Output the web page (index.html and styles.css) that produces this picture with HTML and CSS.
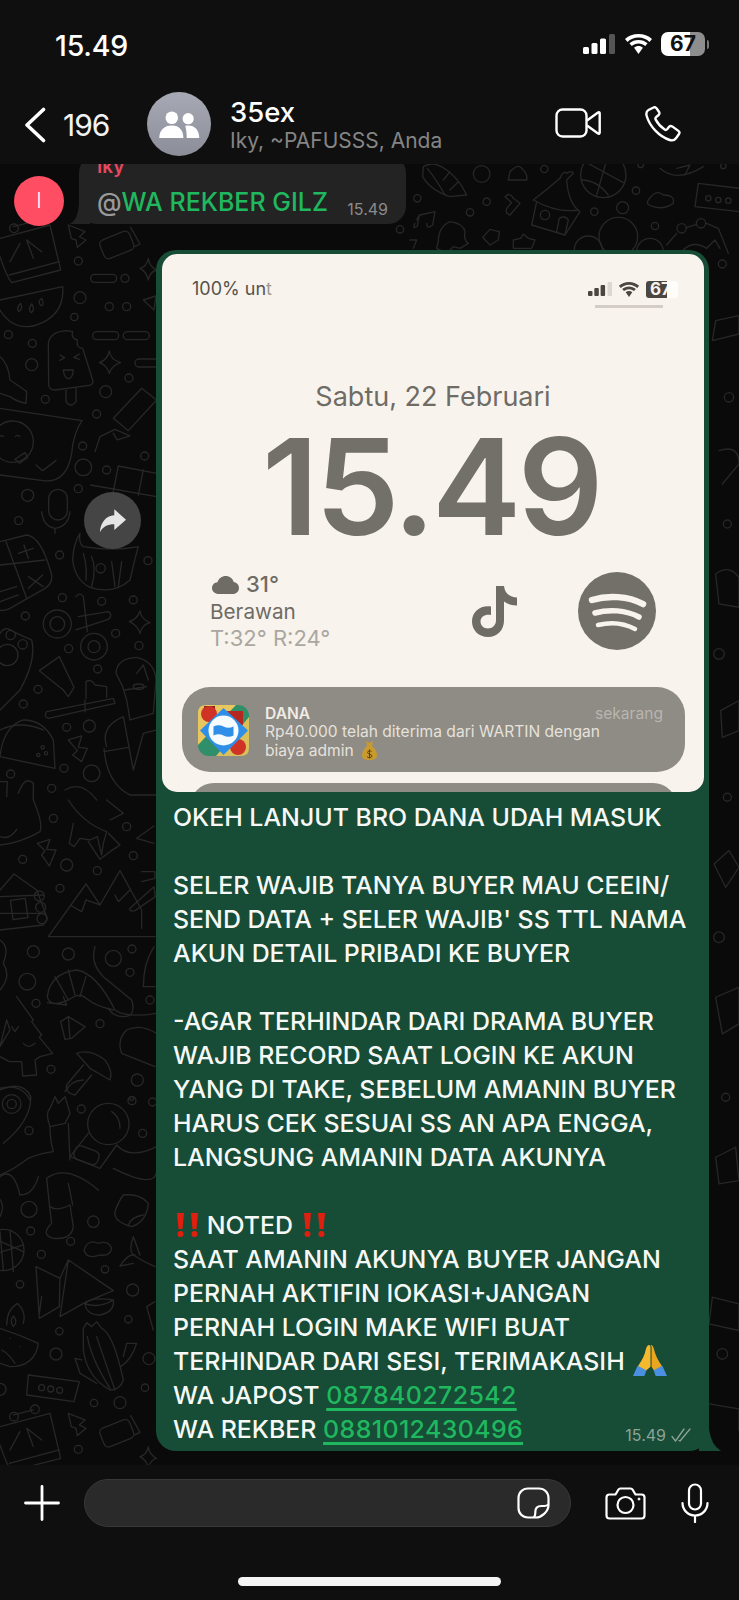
FILE: index.html
```html
<!DOCTYPE html>
<html lang="en">
<head>
    <meta charset="UTF-8">
    <meta name="viewport" content="width=device-width, initial-scale=1.0">
    <title>35ex</title>
    <link rel="stylesheet" href="styles.css">
</head>
<body>
<div class="phone">

    <header class="topbar">
        <div class="status">
            <span class="status-time">15.49</span>
            <div class="status-icons">
                <svg class="signal" viewBox="0 0 32 20"><rect x="0" y="13" width="6" height="7" rx="1.5" fill="#fff"/><rect x="8.5" y="9" width="6" height="11" rx="1.5" fill="#fff"/><rect x="17" y="4.500" width="6" height="15.500" rx="1.500" fill="#fff"/><rect x="26" y="0" width="6" height="20" rx="1.500" fill="#555"/></svg>
                <svg class="wifi" viewBox="0 0 29 20" fill="#fff"><path d="M14.500 3.500c4.300 0 8.100 1.700 11 4.400l2.500-2.800C24.400 1.700 19.700 0 14.500 0S4.600 1.700 1 5.100l2.500 2.800c2.900-2.700 6.700-4.400 11-4.400z"/><path d="M14.500 9.500c2.600 0 4.900 1 6.700 2.600l2.400-2.800C21.200 7.100 18 5.900 14.500 5.900S7.800 7.100 5.400 9.300l2.400 2.800c1.800-1.600 4.100-2.600 6.700-2.600z"/><path d="M14.500 12c-1.700 0-3.200.6-4.400 1.700l4.400 6.300 4.400-6.300C17.700 12.600 16.200 12 14.500 12z"/></svg>
                <div class="battery"><span class="battery-num">67</span></div>
                <span class="battery-nub"></span>
            </div>
        </div>
        <div class="navbar">
            <svg class="back" viewBox="0 0 22 36" fill="none" stroke="#fff" stroke-width="3.600" stroke-linecap="round" stroke-linejoin="round"><path d="M19.500 2.500 3 18l16.500 15.500"/></svg>
            <span class="back-count">196</span>
            <div class="group-avatar">
                <svg viewBox="0 0 42 28" fill="#fff"><circle cx="13" cy="7" r="6.500"/><circle cx="30" cy="8" r="5.800"/><path d="M0 28c0-8 5-13 13-13s12 5 12 13z"/><path d="M27 15.500c1-.3 2-.4 3-.4 7 0 11.500 5 11.500 12.900H28.500c0-5-.5-9-1.500-12.500z"/></svg>
            </div>
            <div class="group-info">
                <div class="group-name">35ex</div>
                <div class="group-members">Iky, ~PAFUSSS, Anda</div>
            </div>
            <svg class="video-icon" viewBox="0 0 46 30" fill="none" stroke="#fff" stroke-width="2.400" stroke-linejoin="round"><rect x="1.500" y="1.500" width="30" height="27" rx="6"/><path d="M32 12.500 43 4.500c1-.6 1.700-.2 1.700 1v19c0 1.200-.7 1.600-1.700 1l-11-8"/></svg>
            <svg class="phone-icon" viewBox="0 0 36 36" fill="none" stroke="#fff" stroke-width="2.400" stroke-linejoin="round"><path d="M8.500 1.500 3.500 4C1.200 5.300 1 7.500 1.700 10c3 10.500 12.500 20.500 23 24 2.500.8 4.800.3 6.300-1.800l3-4.200c.8-1.200.5-2.300-.6-3.100l-6.200-4.500c-1.100-.7-2.200-.6-3.100.4l-2 2.400c-.7.8-1.500.9-2.400.3-3.800-2.500-7-6-9-9.900-.5-1-.4-1.700.4-2.400l2.500-2.200c1-.9 1.100-1.900.5-3L11.700 2.500c-.7-1.200-2-1.700-3.200-1z"/></svg>
        </div>
    </header>

    <main class="chat">
        <svg class="doodles" viewBox="0 164 739 1301" fill="none" stroke="#272727" stroke-width="4" stroke-linecap="round" stroke-linejoin="round">
            <defs>
                <g id="calendar">
                    <path d="M0 55 150 15 182 150 35 188Q20 170 0 110"/>
                    <path d="M28 165 178 125M40 20 100 5"/>
                    <circle cx="42" cy="25" r="13"/>
                    <circle cx="105" cy="3" r="13"/>
                    <path d="M30 125 60 70M100 115 80 60 125 95"/>
                </g>
                <path id="bolt" d="M205 15 255 35 238 50 258 60 232 82 228 60 214 55Z"/>
                <g id="candy">
                    <rect x="303" y="45" width="95" height="60" rx="14" transform="rotate(-22 350 75)"/>
                    <path d="M392 22 420 72 404 80"/>
                </g>
                <path id="star" d="M445 115Q448 140 470 150 450 155 445 180 440 155 420 145 440 140 445 115Z"/>
            </defs>

            <!-- left column, y 220 to 500 -->
            <g transform="translate(0 220) scale(.3333)">
                <use href="#calendar"/>
                <use href="#bolt"/>
                <use href="#candy"/>
                <use href="#star"/>
                <circle cx="235" cy="123" r="12"/>
                <rect x="272" y="163" width="78" height="24" rx="12"/>
                <circle cx="375" cy="175" r="12"/>
                <path d="M0 240 188 200Q195 285 110 315 40 335 0 270"/>
                <path d="M62 250q-14 14-6 24 14-6 6-24zM95 252q-12 16-2 26 14-8 2-26zM125 235q-14 10-2 22 12 0 2-22z"/>
                <circle cx="240" cy="233" r="18"/>
                <circle cx="223" cy="291" r="11"/>
                <circle cx="328" cy="260" r="12"/>
                <circle cx="380" cy="260" r="12"/>
                <path d="M430 240 468 228 462 270Z"/>
                <rect x="278" y="335" width="78" height="24" rx="12"/>
                <rect x="370" y="335" width="78" height="24" rx="12"/>
                <rect x="405" y="417" width="70" height="24" rx="12"/>
                <circle cx="25" cy="344" r="12"/>
                <circle cx="97" cy="370" r="12"/>
                <circle cx="95" cy="434" r="18"/>
                <path d="M145 370Q150 335 200 332L218 335Q212 355 232 360 228 385 248 385L278 480Q282 492 268 496L165 510Q148 510 146 495Z"/>
                <path d="M198 510V545Q212 565 228 545V505M180 405l14 8-14 8M238 402l-16 10 16 6M190 450h30q-2 25-14 26-14-2-16-26z"/>
                <path d="M0 410Q25 430 30 480 60 500 80 515L78 550Q50 545 30 530L0 520"/>
                <path d="M328 393Q332 420 362 428 335 436 328 460 320 435 298 428 322 420 328 393Z"/>
                <circle cx="387" cy="474" r="12"/>
                <circle cx="317" cy="515" r="18"/>
                <circle cx="136" cy="538" r="12"/>
                <circle cx="290" cy="582" r="12"/>
                <path d="M0 565 246 602Q220 640 215 700 200 790 130 782L0 765"/>
                <circle cx="38" cy="665" r="62"/>
                <path d="M10 650q-6-6-12 0M60 650q-6-8-14 0M45 718l30-20 8 14-24 18z"/>
                <path d="M108 735 128 752 168 722"/>
                <circle cx="248" cy="678" r="12"/>
                <circle cx="250" cy="742" r="25"/>
                <circle cx="320" cy="750" r="12"/>
                <circle cx="434" cy="708" r="12"/>
                <circle cx="235" cy="806" r="12"/>
                <circle cx="83" cy="826" r="18"/>
                <rect x="146" y="808" width="56" height="92" rx="28"/>
                <path d="M285 695 300 650 345 628 390 648 352 660 340 640M340 595 425 505 470 540 385 632Z"/>
                <path d="M355 738 470 760M272 795 470 830M355 738 340 815M430 750 415 825"/>
            </g>

            <!-- left column, y 500 to 800 -->
            <g transform="translate(0 500) scale(.3333)">
                <circle cx="56" cy="62" r="12"/>
                <path d="M125 35Q130 80 165 85 205 80 210 35M165 85V100"/>
                <path d="M0 125 80 105Q125 110 155 225 158 250 135 265L30 325Q5 335 0 330"/>
                <path d="M18 125 80 295M0 195 135 180M55 160 100 145M72 135 85 175M85 230 130 260M128 225 85 265M0 275 50 260M0 305 55 285"/>
                <circle cx="179" cy="165" r="12"/>
                <path d="M240 100Q235 130 250 140 340 155 415 140 405 175 390 240 340 285 270 262 225 240 218 180 220 130 240 100Z"/>
                <path d="M250 160Q262 200 258 240M275 170Q290 205 275 260M335 185 345 260M365 185 355 262"/>
                <circle cx="302" cy="205" r="14"/>
                <circle cx="444" cy="182" r="12"/>
                <circle cx="187" cy="293" r="12"/>
                <circle cx="305" cy="304" r="12"/>
                <circle cx="400" cy="300" r="12"/>
                <path d="M228 290Q240 275 250 290L262 395M235 350 325 335Q340 345 325 358L228 390"/>
                <circle cx="172" cy="372" r="42"/>
                <circle cx="172" cy="372" r="22"/>
                <circle cx="282" cy="440" r="40"/>
                <circle cx="282" cy="440" r="18"/>
                <circle cx="76" cy="348" r="12"/>
                <circle cx="347" cy="400" r="12"/>
                <circle cx="417" cy="437" r="12"/>
                <circle cx="206" cy="446" r="12"/>
                <path d="M420 333Q424 358 450 368 425 375 420 400 412 375 388 365 412 358 420 333Z"/>
                <path d="M0 400Q15 375 40 395 60 405 95 420 110 480 60 570L0 630"/>
                <circle cx="32" cy="405" r="14"/>
                <circle cx="68" cy="433" r="14"/>
                <circle cx="22" cy="465" r="32"/>
                <path d="M118 512 178 470 222 562 205 590 190 570Z"/>
                <circle cx="293" cy="507" r="12"/>
                <circle cx="114" cy="568" r="12"/>
                <circle cx="70" cy="612" r="12"/>
                <path d="M140 635 340 595 345 610 145 655Q130 650 140 635ZM255 600V635M258 595V545Q275 535 285 555L320 560V592"/>
                <path d="M348 520Q350 475 410 472 465 485 468 540L460 640 390 660 380 600 368 560Z"/>
                <path d="M375 570 440 560M410 520 430 495 445 540M400 560a16 8 0 1 0 32 0 16 8 0 1 0-32 0M320 740Q300 680 370 650L400 810 430 700 470 690"/>
                <path d="M312 745Q320 850 390 885L470 885M312 755 385 742"/>
                <path d="M0 770Q10 680 70 660 130 660 160 720L165 805 0 770Z"/>
                <path d="M0 690Q60 660 130 690"/>
                <circle cx="128" cy="742" r="5"/>
                <circle cx="138" cy="760" r="5"/>
                <circle cx="115" cy="765" r="5"/>
                <circle cx="200" cy="682" r="12"/>
                <circle cx="268" cy="678" r="18"/>
                <path d="M205 720 245 708 235 742 262 745 245 785 218 765 232 752Z"/>
                <circle cx="192" cy="805" r="12"/>
                <circle cx="275" cy="820" r="25"/>
                <circle cx="32" cy="822" r="12"/>
                <circle cx="155" cy="865" r="12"/>
                <path d="M0 845H22L20 890M55 880Q75 825 100 850V900M195 870Q245 840 290 900"/>
            </g>

            <!-- left column, y 800 to 1080 -->
            <g transform="translate(0 800) scale(.3333)">
                <path d="M100 0Q130 70 120 95 60 130 0 135M0 110q30 10 50-22"/>
                <circle cx="160" cy="55" r="12"/>
                <path d="M205 0Q250 70 320 95L310 130 305 165 292 110 270 120 240 115 222 140 208 130 220 70"/>
                <path d="M265 125 300 178 330 155 360 135 325 100M320 0 370 40 330 60"/>
                <circle cx="380" cy="80" r="12"/>
                <path d="M462 78 410 115 462 130"/>
                <path d="M112 130 150 118 140 148 168 150 148 198 125 165 135 152Z"/>
                <circle cx="68" cy="178" r="12"/>
                <circle cx="200" cy="195" r="18"/>
                <circle cx="292" cy="212" r="12"/>
                <circle cx="400" cy="167" r="12"/>
                <circle cx="180" cy="265" r="12"/>
                <path d="M0 270 42 222 110 270 142 355 130 375 0 390M0 340 135 340M0 290 130 285"/>
                <rect x="35" y="298" width="45" height="58" transform="rotate(-8 57 327)"/>
                <circle cx="118" cy="288" r="15"/>
                <circle cx="122" cy="322" r="15"/>
                <circle cx="126" cy="356" r="15"/>
                <path d="M145 410 258 252 300 315 360 212 425 330V385M145 410H370L465 410M215 318 245 335 258 300 300 315M345 285 355 305 390 270M425 215H465V235L425 245"/>
                <path d="M390 325 462 260 466 290 405 332Q385 335 390 325Z"/>
                <circle cx="100" cy="455" r="18"/>
                <circle cx="205" cy="462" r="18"/>
                <circle cx="82" cy="545" r="25"/>
                <circle cx="108" cy="610" r="12"/>
                <path d="M0 420Q30 440 10 490 35 530 0 570"/>
                <path d="M285 440Q270 490 310 530L395 600Q410 650 370 650 340 650 325 625"/>
                <circle cx="340" cy="475" r="24"/>
                <circle cx="396" cy="447" r="12"/>
                <circle cx="390" cy="517" r="12"/>
                <circle cx="450" cy="600" r="12"/>
                <path d="M462 440Q430 490 430 560H465"/>
                <path d="M142 590Q150 520 230 510 290 520 345 630 380 655 470 640"/>
                <path d="M142 590Q150 625 205 600 240 575 258 595 290 620 340 630M165 530 205 600M205 510 225 585M258 530 240 590M142 608 200 615 190 590"/>
                <path d="M182 665 205 650 255 680 215 715 195 718ZM205 650 210 715"/>
                <circle cx="300" cy="671" r="12"/>
                <path d="M470 700Q420 670 380 690 350 720 365 760L465 800"/>
                <path d="M50 590 100 660 95 665 125 705 118 712 158 760 120 770 105 780 110 825 68 828 65 785 28 785 0 770M0 740 30 690 20 660Z"/>
                <path d="M35 680 45 695 55 680M70 730Q85 748 105 730"/>
                <circle cx="153" cy="808" r="12"/>
                <path d="M230 760Q270 745 315 780 340 815 330 840L270 805ZM250 795 200 855Q195 880 225 885L275 825"/>
                <circle cx="412" cy="840" r="18"/>
                <circle cx="395" cy="895" r="6"/>
                <path d="M0 865Q65 850 90 900"/>
            </g>

            <!-- left column, y 1080 to 1465 -->
            <g transform="translate(0 1080) scale(.3333)">
                <path d="M195 35Q215 0 250 0M0 30Q70 0 92 50 95 120 10 190"/>
                <circle cx="35" cy="72" r="28"/>
                <circle cx="35" cy="72" r="14"/>
                <circle cx="87" cy="152" r="12"/>
                <circle cx="244" cy="87" r="12"/>
                <circle cx="396" cy="62" r="12"/>
                <circle cx="458" cy="66" r="12"/>
                <circle cx="428" cy="160" r="12"/>
                <path d="M165 50 175 70 195 50 210 100 195 130 150 140Q135 100 150 85Z"/>
                <path d="M150 140Q150 180 160 215 120 220 85 235 40 270 0 285M205 130 210 240"/>
                <circle cx="325" cy="132" r="62"/>
                <path d="M335 95Q360 110 360 145M265 160 210 230 300 265 350 195Q390 240 470 200"/>
                <rect x="222" y="205" width="75" height="42" rx="16" transform="rotate(20 260 226)"/>
                <path d="M340 265Q470 330 470 270M0 290Q40 260 60 345 100 345 115 290M140 295Q200 250 295 330M140 295 150 390 155 430Q120 465 160 475 215 480 220 440L210 375Q170 395 150 380"/>
                <path d="M205 310 218 375"/>
                <path d="M0 358Q15 380 0 410"/>
                <circle cx="87" cy="388" r="24"/>
                <circle cx="280" cy="425" r="17"/>
                <path d="M370 345Q420 340 445 370 440 425 395 440 340 425 345 395 355 365 370 345ZM385 435Q395 410 430 405"/>
                <circle cx="10" cy="510" r="62"/>
                <path d="M-30 470 70 515M-40 530 70 495M30 450 40 575M0 455 10 570"/>
                <circle cx="92" cy="453" r="12"/>
                <circle cx="212" cy="484" r="12"/>
                <circle cx="124" cy="523" r="12"/>
                <path d="M252 510Q265 475 295 490 325 480 335 505 330 530 300 525 260 540 252 510Z"/>
                <path d="M400 470Q385 510 400 525 430 545 465 560M400 470 420 525M360 558Q385 520 405 525M360 558 400 550"/>
                <circle cx="315" cy="568" r="11"/>
                <circle cx="398" cy="630" r="18"/>
                <circle cx="60" cy="613" r="11"/>
                <path d="M108 560 180 595 178 680 118 715ZM205 540 340 632 260 665 180 710ZM180 595 205 540M118 700 125 650"/>
                <path d="M255 672Q270 650 340 660 345 695 300 705 260 705 255 672ZM255 672Q300 685 340 660"/>
                <circle cx="178" cy="754" r="11"/>
                <circle cx="168" cy="822" r="18"/>
                <circle cx="385" cy="718" r="11"/>
                <path d="M20 735Q20 690 52 670 80 695 70 730"/>
                <path d="M40 708Q28 722 40 740 55 725 40 708Z"/>
                <path d="M0 745Q60 765 115 790 105 860 30 860L0 850M5 810Q25 820 45 850M30 775h1M60 800h1"/>
                <path d="M465 665 440 680 460 750"/>
                <path d="M250 745 260 728 275 740 290 725 305 745Q340 760 370 900 360 930 330 930 260 890 250 810ZM290 770Q310 830 345 930M262 770Q275 840 330 925M370 830 380 790 410 790Q395 840 362 860M245 840 225 835 240 880 290 910"/>
                <circle cx="447" cy="836" r="18"/>
                <circle cx="435" cy="923" r="11"/>
                <circle cx="282" cy="969" r="11"/>
                <circle cx="360" cy="968" r="18"/>
                <path d="M85 885 238 905 222 965 80 945Z"/>
                <circle cx="125" cy="923" r="9"/>
                <circle cx="152" cy="927" r="9"/>
                <circle cx="179" cy="931" r="9"/>
                <circle cx="0" cy="928" r="18"/>
                <g transform="translate(0 985)">
                    <use href="#calendar"/>
                    <use href="#bolt"/>
                    <use href="#candy"/>
                    <use href="#star"/>
                    <circle cx="235" cy="123" r="12"/>
                </g>
            </g>

            <!-- top strip, right of the received bubble -->
            <g transform="translate(400 160) scale(.3333)">
                <path d="M70 20Q100 0 140 30 180 60 200 105L150 110Q90 90 68 50Z"/>
                <path d="M82 25Q110 60 135 105M150 35 130 60M175 65 150 90"/>
                <circle cx="245" cy="42" r="25"/>
                <path d="M330 35Q350 15 360 20 385 40 380 60H325Z"/>
                <circle cx="433" cy="27" r="11"/>
                <circle cx="52" cy="115" r="11"/>
                <circle cx="260" cy="125" r="11"/>
                <circle cx="210" cy="157" r="11"/>
                <path d="M315 110Q330 95 340 115L360 130 330 165Q315 160 320 145L335 128Z"/>
                <path d="M60 165 105 155 98 195Q80 210 80 190M50 180 58 165 52 198Q35 210 45 190"/>
                <path d="M400 120Q440 90 480 55 490 30 500 40 515 30 520 40L500 60Q505 130 540 155L495 225 395 195 410 125"/>
                <path d="M400 120Q470 160 535 150"/>
                <circle cx="435" cy="165" r="14"/>
                <path d="M470 215 478 175Q495 165 505 180L495 225"/>
                <circle cx="610" cy="45" r="68"/>
                <path d="M555 5 670 68M545 60Q590 60 625 105M620 0 590 105"/>
                <path d="M780 25Q830 70 910 20"/>
                <path d="M830 25 870 15 855 45"/>
                <circle cx="722" cy="15" r="8"/>
                <circle cx="970" cy="18" r="8"/>
                <circle cx="708" cy="92" r="11"/>
                <circle cx="583" cy="155" r="11"/>
                <circle cx="668" cy="143" r="18"/>
                <circle cx="765" cy="198" r="11"/>
                <path d="M745 120Q770 85 790 105 825 105 820 130 790 150 760 140 735 135 745 120Z"/>
                <path d="M895 70 1020 85V155L885 140Z"/>
                <circle cx="925" cy="115" r="8"/>
                <circle cx="955" cy="120" r="8"/>
                <circle cx="985" cy="122" r="8"/>
                <circle cx="655" cy="230" r="58"/>
                <circle cx="565" cy="270" r="42"/>
                <circle cx="750" cy="275" r="40"/>
                <circle cx="845" cy="205" r="14"/>
                <circle cx="903" cy="190" r="14"/>
                <path d="M858 203 890 193M830 220 800 255M920 190 955 205 985 280"/>
                <path d="M115 245Q115 200 150 185 190 190 195 215 190 240 205 250L180 265 160 260 140 280 110 265Z"/>
                <path d="M248 232 270 208 298 215 295 240 270 255Z"/>
                <path d="M340 240 362 235 370 222 385 235 405 240 395 265 340 265Z"/>
                <path d="M30 240 50 240 40 265"/>
                <circle cx="0" cy="208" r="11"/>
                <path d="M850 270Q880 240 920 265L945 240 960 265"/>
            </g>

            <!-- right edge -->
            <g transform="translate(709 164) scale(.3333)">
                <circle cx="40" cy="300" r="12"/>
                <path d="M20 470 90 455V510L10 530Z"/>
                <circle cx="60" cy="700" r="14"/>
                <path d="M30 860Q90 840 90 900L40 960"/>
                <circle cx="55" cy="1080" r="12"/>
                <path d="M20 1230Q60 1200 90 1240V1330L30 1320Z"/>
                <circle cx="30" cy="1470" r="16"/>
                <path d="M35 1640 90 1610V1700L40 1720Z"/>
                <circle cx="55" cy="1900" r="12"/>
                <path d="M15 2100 60 2060 90 2110 50 2170Z"/>
                <circle cx="30" cy="2320" r="16"/>
                <path d="M20 2500 90 2470V2580L40 2610Z"/>
                <circle cx="50" cy="2800" r="12"/>
                <path d="M20 2980 80 2950 90 3050 30 3060Z"/>
                <path d="M10 3400 90 3420V3500L0 3480Z"/>
                <circle cx="40" cy="3570" r="16"/>
                <path d="M0 3720 90 3735V3800"/>
            </g>
        </svg>

        <div class="msg-in">
            <div class="msg-in-avatar">I</div>
            <div class="msg-in-bubble">
                <div class="msg-in-name">Iky</div>
                <div class="msg-in-text"><span class="at">@</span><span class="mention">WA REKBER GILZ</span><span class="msg-in-time">15.49</span></div>
            </div>
        </div>

        <div class="msg-out">
            <button class="forward">
                <svg viewBox="0 0 30 26" fill="#e6e6e6"><path d="M17 0 30 11.500 17 23v-6.500C9.500 16.500 4.500 19 1 25.500 1.500 15 7.500 7 17 6.500z"/></svg>
            </button>
            <div class="msg-out-bubble">
                <div class="shot">
                    <div class="shot-status">
                        <span class="shot-carrier">100% un<span class="fade">t</span></span>
                        <div class="shot-icons">
                            <svg class="shot-signal" viewBox="0 0 24 14"><rect x="0" y="9" width="4.500" height="5" rx="1" fill="#4b463f"/><rect x="6.300" y="6" width="4.500" height="8" rx="1" fill="#4b463f"/><rect x="12.600" y="3" width="4.500" height="11" rx="1" fill="#4b463f"/><rect x="19.500" y="0" width="4.500" height="14" rx="1" fill="#dcd7cf"/></svg>
                            <svg class="shot-wifi" viewBox="0 0 29 20" fill="#4b463f"><path d="M14.500 3.500c4.300 0 8.100 1.700 11 4.400l2.500-2.800C24.400 1.700 19.700 0 14.500 0S4.600 1.700 1 5.100l2.500 2.800c2.900-2.700 6.700-4.400 11-4.400z"/><path d="M14.500 9.500c2.600 0 4.900 1 6.700 2.600l2.400-2.800C21.200 7.100 18 5.900 14.500 5.900S7.800 7.100 5.400 9.300l2.400 2.800c1.800-1.600 4.100-2.600 6.700-2.600z"/><path d="M14.500 12c-1.700 0-3.200.6-4.400 1.700l4.400 6.300 4.400-6.300C17.700 12.600 16.200 12 14.500 12z"/></svg>
                            <div class="shot-battery"><span>67</span></div>
                        </div>
                    </div>
                    <div class="shot-line"></div>
                    <div class="shot-date">Sabtu, 22 Februari</div>
                    <div class="shot-clock">15.49</div>
                    <div class="widgets">
                        <div class="weather">
                            <div class="weather-temp">
                                <svg viewBox="0 0 27 18" fill="#6f6b65"><path d="M7 18C3 18 0 15.500 0 12c0-3.200 2.400-5.500 5.500-5.800C6.600 2.500 10 0 13.700 0c3.900 0 7 2.400 8 6 3 .5 5.300 2.800 5.300 6 0 3.400-2.800 6-6 6z"/></svg>
                                31°
                            </div>
                            <div class="weather-desc">Berawan</div>
                            <div class="weather-range">T:32° R:24°</div>
                        </div>
                        <svg class="tiktok" viewBox="0 0 45 51" fill="#6f6b65"><path d="M24 0h8c.5 6.500 5 11 13 11.500v8c-5 .2-9.500-1.300-13-4v19C32 44 25.500 51 16 51 7 51 0 44.500 0 35.500 0 25.500 8.500 19 19 20.500v8.500c-5.500-1.200-10.500 1.500-10.500 6.500 0 4.200 3.300 7 7.300 7 4.500 0 8.200-3 8.200-8.500z"/></svg>
                        <svg class="spotify" viewBox="0 0 78 78"><circle cx="39" cy="39" r="39" fill="#736f69"/><g fill="none" stroke="#f8f4ed" stroke-linecap="round"><path d="M14 28c16-5 36-4 51 4" stroke-width="6.500"/><path d="M17 41c14-4 31-3 44 4" stroke-width="5.500"/><path d="M20 53c12-3 26-2 37 4" stroke-width="4.500"/></g></svg>
                    </div>
                    <div class="notif">
                        <svg class="dana-icon" viewBox="0 0 51 51">
                            <rect width="51" height="51" rx="11" fill="#2f8f6a"/>
                            <path d="M0 8Q0 0 8 0H38L0 40Z" fill="#e9c75f"/>
                            <path d="M51 12V43Q51 51 43 51H18Z" fill="#d9c05a"/>
                            <rect x="29" y="6" width="16" height="14" fill="#b5281f"/>
                            <rect x="6" y="1" width="11" height="3" fill="#7a2a1a"/>
                            <circle cx="11" cy="9" r="8" fill="#cf3325"/>
                            <circle cx="40" cy="42" r="8" fill="#cf3325"/>
                            <path d="M25.500 3 50 25.500 25.500 50 2 25.500Z" fill="#2f8fe8"/>
                            <circle cx="25.500" cy="25.500" r="15" fill="#f5fbff"/>
                            <path d="M15.500 21.500q5-2.500 10 0t10 0v9q-5 2.500-10 0t-10 0z" fill="#2f8fe8"/>
                        </svg>
                        <div class="notif-body">
                            <div class="notif-head"><span class="notif-app">DANA</span><span class="notif-when">sekarang</span></div>
                            <div class="notif-text">Rp40.000 telah diterima dari WARTIN dengan<br>biaya admin
                                <svg class="moneybag" viewBox="0 0 15 19"><path d="M4 0 7.500 2 11 0 10 5C13 7.500 15 10.500 15 14c0 4-3 5-7.500 5S0 18 0 14c0-3.500 2-6.500 5-9z" fill="#c99a2e"/><path d="M9.500 10.500C9 9.500 5.500 9.500 5.500 11.500s4.500 1.500 4.500 3.500-4 2-5 .7M7.500 8.500v9" fill="none" stroke="#5c4410" stroke-width="1"/></svg>
                            </div>
                        </div>
                    </div>
                    <div class="notif-next"></div>
                </div>
                <div class="msg-out-text">
                    OKEH LANJUT BRO DANA UDAH MASUK<br>
                    <br>
                    SELER WAJIB TANYA BUYER MAU CEEIN/<br>
                    SEND DATA + SELER WAJIB' SS TTL NAMA<br>
                    AKUN DETAIL PRIBADI KE BUYER<br>
                    <br>
                    -AGAR TERHINDAR DARI DRAMA BUYER<br>
                    WAJIB RECORD SAAT LOGIN KE AKUN<br>
                    YANG DI TAKE, SEBELUM AMANIN BUYER<br>
                    HARUS CEK SESUAI SS AN APA ENGGA,<br>
                    LANGSUNG AMANIN DATA AKUNYA<br>
                    <br>
                    <svg class="bangs" viewBox="0 0 23 24" fill="#e0200f"><path d="M1 0h7L6.500 16h-4zM15 0h7l-1.500 16h-4z"/><circle cx="4.500" cy="21" r="3"/><circle cx="18.500" cy="21" r="3"/></svg>
                    NOTED
                    <svg class="bangs" viewBox="0 0 23 24" fill="#e0200f"><path d="M1 0h7L6.500 16h-4zM15 0h7l-1.500 16h-4z"/><circle cx="4.500" cy="21" r="3"/><circle cx="18.500" cy="21" r="3"/></svg><br>
                    SAAT AMANIN AKUNYA BUYER JANGAN<br>
                    PERNAH AKTIFIN IOKASI+JANGAN<br>
                    PERNAH LOGIN MAKE WIFI BUAT<br>
                    TERHINDAR DARI SESI, TERIMAKASIH
                    <svg class="pray" viewBox="0 0 33 30"><path d="M15.500 0c1 0 1.500 1 1.500 2v19l-4.500 4-8-4c2-3 5-7 7-13 1-4 2-8 4-8z" fill="#f5b92e"/><path d="M17.500 0c-1 0 .5 1 .5 2v19l2.500 4 8-4c-2-3-5-7-7-13-1-4-2-8-4-8z" fill="#eaa61f"/><path d="M4.500 20 13 24.500 11 30H0zM28.500 20 20 24.500 22 30h11z" fill="#4a8fe0"/></svg><br>
                    WA JAPOST <a class="num" href="#">087840272542</a><br>
                    WA REKBER <a class="num" href="#">0881012430496</a>
                </div>
                <div class="msg-out-meta">
                    <span>15.49</span>
                    <svg viewBox="0 0 20 14" fill="none" stroke="#8da398" stroke-width="1.300" stroke-linecap="round" stroke-linejoin="round"><path d="M1 8.500 4.500 13 13 1M8 12.500 9 13 19 1"/></svg>
                </div>
            </div>
        </div>
    </main>

    <footer class="composer">
        <div class="composer-row">
            <svg class="plus" viewBox="0 0 36 36" stroke="#fff" stroke-width="2.800" stroke-linecap="round"><path d="M18 1.500v33M1.500 18h33"/></svg>
            <div class="input">
                <svg class="sticker" viewBox="0 0 33 32" fill="none" stroke="#fff" stroke-width="2.200" stroke-linejoin="round"><path d="M11 1.500h11c5.500 0 9.500 4 9.500 9.500v7C31.500 25 24 30.500 19 30.500h-8C5.500 30.500 1.500 26.500 1.500 21V11C1.500 5.500 5.500 1.500 11 1.500z"/><path d="M31.300 17.500c-1 1-2 1.500-4 1.500h-3c-4 0-6 2.500-6 6v1c0 2-.5 3.500-1.500 4.500"/></svg>
            </div>
            <svg class="camera" viewBox="0 0 41 33" fill="none" stroke="#fff" stroke-width="2.200" stroke-linejoin="round"><path d="M4.500 7.500h6l3-5c.4-.7 1-1 1.800-1h10.400c.8 0 1.400.3 1.800 1l3 5h6c1.700 0 3 1.300 3 3v18c0 1.700-1.300 3-3 3h-32c-1.700 0-3-1.300-3-3v-18c0-1.700 1.300-3 3-3z"/><circle cx="20.500" cy="18" r="8"/><circle cx="34" cy="12" r="1" fill="#fff" stroke-width="1"/></svg>
            <svg class="mic" viewBox="0 0 28 40" fill="none" stroke="#fff" stroke-width="2.200" stroke-linecap="round"><rect x="8" y="1.500" width="12" height="25" rx="6"/><path d="M1.500 20c0 7 5.500 12.500 12.500 12.500S26.500 27 26.500 20M14 33v6"/></svg>
        </div>
        <div class="home-bar"></div>
    </footer>

</div>
</body>
</html>
```

FILE: styles.css
```css
* {
    margin: 0;
    padding: 0;
    box-sizing: border-box;
}

body {
    font-family: Inter, "Noto Sans", sans-serif;
    background-color: #0f0f0f;
    color: white;
}

.phone {
    width: 739px;
    height: 1600px;
    display: flex;
    flex-direction: column;
    overflow: hidden;
}

/* Top bar */
.topbar {
    height: 164px;
    flex-shrink: 0;
    background-color: #0f0f0f;
    position: relative;
    z-index: 2;
}

.status {
    height: 88px;
    padding: 30px 30px 0 55px;
    display: flex;
    justify-content: space-between;
    align-items: flex-start;
}

.status-time {
    font-size: 28.500px;
    line-height: 32px;
    font-weight: 500;
    letter-spacing: -0.2px;
}

.status-icons {
    display: flex;
    align-items: center;
    height: 32px;
    margin-top: -2px;
}

.signal {
    width: 32px;
    height: 20px;
    margin-right: 9px;
}

.wifi {
    width: 29px;
    height: 20px;
    margin-right: 8px;
}

.battery {
    width: 44px;
    height: 24px;
    border-radius: 7px;
    background: linear-gradient(to right, #fff 66%, #8e8e8e 66%);
    color: #111;
    text-align: center;
}

.battery-num {
    font-size: 21px;
    line-height: 24px;
    font-weight: 700;
    display: block;
}

.battery-nub {
    width: 2px;
    height: 9px;
    margin-left: 2px;
    background-color: #777;
    border-radius: 0 2px 2px 0;
}

.navbar {
    display: flex;
    align-items: flex-start;
    padding-left: 24px;
    height: 76px;
}

.back {
    width: 22px;
    height: 36px;
    margin-top: 19px;
}

.back-count {
    font-size: 30px;
    line-height: 36px;
    margin: 19px 0 0 17px;
    width: 84px;
    letter-spacing: -1px;
    color: #f2f2f2;
}

.group-avatar {
    width: 64px;
    height: 64px;
    border-radius: 50%;
    margin-top: 4px;
    background: linear-gradient(#a7aab4, #8b8e98);
    display: flex;
    align-items: center;
    justify-content: center;
}

.group-avatar svg {
    width: 41px;
    height: 27px;
}

.group-info {
    margin-left: 19px;
    width: 325px;
    margin-top: 7px;
}

.group-name {
    font-size: 27.500px;
    line-height: 34px;
    font-weight: 500;
}

.group-members {
    font-size: 21px;
    line-height: 24px;
    margin-top: 0;
    color: #858585;
}

.video-icon {
    width: 46px;
    height: 30px;
    margin-top: 20px;
}

.phone-icon {
    width: 36px;
    height: 36px;
    margin: 18px 0 0 44px;
}

/* Chat */
.chat {
    flex: 1;
    position: relative;
    overflow: hidden;
    background-color: #0a0a0a;
}

.doodles {
    position: absolute;
    top: 0;
    left: 0;
    width: 739px;
    height: 1301px;
}

.msg-in {
    position: relative;
    display: flex;
    align-items: flex-end;
    padding-left: 14px;
    margin-top: -9px;
}

.msg-in-avatar {
    width: 50px;
    height: 50px;
    border-radius: 50%;
    margin-bottom: -2px;
    background-color: #ff4e64;
    text-align: center;
    font-size: 21px;
    line-height: 50px;
    font-weight: 300;
}

.msg-in-bubble {
    position: relative;
    margin-left: 15px;
    width: 327px;
    padding: 0 18px 2px;
    background-color: #232323;
    border-radius: 18px;
}

.msg-in-bubble::before {
    content: "";
    position: absolute;
    left: -9px;
    bottom: 0;
    width: 20px;
    height: 20px;
    background-color: #232323;
    clip-path: path("M0 20 Q8 16 9 0 L20 0 L20 20 Z");
}

.msg-in-name {
    font-size: 19px;
    line-height: 24px;
    font-weight: 600;
    color: #e8475f;
}

.msg-in-text {
    padding-top: 6px;
    font-size: 25px;
    line-height: 34px;
    font-weight: 500;
    white-space: nowrap;
    display: flex;
    align-items: baseline;
}

.at {
    color: #9a9a9a;
}

.mention {
    color: #20b85f;
}

.msg-in-time {
    margin-left: auto;
    font-size: 16px;
    font-weight: 400;
    color: #8b8b8b;
    position: relative;
    top: 4px;
}

.msg-out {
    position: relative;
    display: flex;
    justify-content: flex-end;
    margin-top: 26px;
    padding-right: 30px;
}

.forward {
    width: 57px;
    height: 57px;
    margin: 242px 15px 0 0;
    border: none;
    border-radius: 50%;
    background-color: #454545;
    display: flex;
    align-items: center;
    justify-content: center;
}

.forward svg {
    width: 27px;
    height: 24px;
}

.msg-out-bubble {
    position: relative;
    width: 553px;
    padding: 4px 5px 5px 6px;
    background-color: #174c37;
    border-radius: 20px;
}

.msg-out-bubble::after {
    content: "";
    position: absolute;
    right: -12px;
    bottom: 0;
    width: 22px;
    height: 22px;
    background-color: #174c37;
    clip-path: path("M0 0 L10 0 Q12 16 22 22 L0 22 Z");
}

/* Screenshot inside the bubble */
.shot {
    height: 538px;
    overflow: hidden;
    border-radius: 15px;
    background-color: #f8f4ed;
    color: #6f6b65;
}

.shot-status {
    display: flex;
    justify-content: space-between;
    padding: 24px 26px 0 30px;
    height: 47px;
}

.shot-carrier {
    font-size: 18px;
    line-height: 22px;
    color: #56514a;
}

.fade {
    opacity: 0.55;
}

.shot-icons {
    display: flex;
    align-items: center;
    height: 22px;
}

.shot-signal {
    width: 24px;
    height: 14px;
    margin-right: 6px;
}

.shot-wifi {
    width: 22px;
    height: 15px;
    margin-right: 6px;
}

.shot-battery {
    width: 32px;
    height: 17px;
    border-radius: 3px;
    background: linear-gradient(to right, #4b463f 66%, #fffdf9 66%);
    overflow: hidden;
}

.shot-battery span {
    display: block;
    width: 21px;
    padding-left: 4px;
    font-size: 17px;
    line-height: 17px;
    font-weight: 700;
    color: #f8f4ed;
    white-space: nowrap;
    overflow: hidden;
}

.shot-line {
    width: 68px;
    height: 3px;
    margin: 4px 41px 0 auto;
    background-color: #d3cdc6;
}

.shot-date {
    margin-top: 72px;
    text-align: center;
    font-size: 27px;
    line-height: 34px;
}

.shot-clock {
    margin-top: 7px;
    text-align: center;
    font-size: 134px;
    line-height: 130px;
    font-weight: 600;
    letter-spacing: -3.500px;
    color: #736f69;
    padding-right: 4px;
}

.widgets {
    display: flex;
    align-items: flex-start;
    margin-top: 20px;
    padding: 0 48px 0 48px;
}

.weather {
    flex: 1;
    font-size: 22px;
    line-height: 27px;
}

.weather-temp {
    display: flex;
    align-items: center;
    font-weight: 500;
}

.weather-temp svg {
    width: 27px;
    height: 18px;
    margin: 0 7px 0 2px;
}

.weather-desc {
    font-size: 20.700px;
}

.weather-range {
    color: #aaa7a1;
}

.tiktok {
    width: 45px;
    height: 51px;
    margin-top: 15px;
}

.spotify {
    width: 78px;
    height: 78px;
    margin-left: 61px;
    margin-top: 1px;
}

.notif {
    display: flex;
    height: 85px;
    margin: 35px 19px 0 20px;
    padding: 18px 22px 0 16px;
    background-color: #8f8b85;
    border-radius: 28px;
}

.dana-icon {
    width: 51px;
    height: 51px;
    flex-shrink: 0;
}

.notif-body {
    flex: 1;
    margin-left: 16px;
    font-size: 15.600px;
    line-height: 18px;
    color: #e6e2db;
}

.notif-head {
    display: flex;
    justify-content: space-between;
}

.notif-app {
    font-weight: 600;
    color: #f0ece5;
}

.notif-when {
    color: #b9b5af;
}

.moneybag {
    width: 15px;
    height: 19px;
    margin-left: 4px;
    vertical-align: -4px;
}

.notif-next {
    height: 40px;
    margin: 11px 27px 0 28px;
    background-color: #8f8b85;
    border-radius: 24px 24px 0 0;
}

/* Message text */
.msg-out-text {
    margin-top: 8px;
    padding: 0 11px;
    font-size: 24.900px;
    line-height: 34px;
    font-weight: 500;
    white-space: nowrap;
    color: #f6f8f6;
}

.bangs {
    width: 23px;
    height: 24px;
    margin: 0 1px 0 3px;
    vertical-align: -3px;
}

.pray {
    width: 34px;
    height: 31px;
    margin-left: 2px;
    vertical-align: -6px;
}

.num {
    color: #20b85f;
    letter-spacing: 0.4px;
    text-decoration: underline;
    text-decoration-thickness: 2.500px;
    text-underline-offset: 4px;
}

.msg-out-meta {
    position: absolute;
    right: 18px;
    bottom: 6px;
    display: flex;
    align-items: center;
    gap: 5px;
    font-size: 16px;
    line-height: 20px;
    color: #8da398;
}

.msg-out-meta svg {
    width: 20px;
    height: 14px;
}

/* Composer */
.composer {
    height: 135px;
    flex-shrink: 0;
    background-color: #0f0f0f;
    position: relative;
    z-index: 2;
}

.composer-row {
    display: flex;
    align-items: center;
    padding: 14px 0 0 24px;
    height: 62px;
}

.plus {
    width: 36px;
    height: 36px;
}

.input {
    width: 487px;
    height: 48px;
    margin-left: 24px;
    padding-right: 20px;
    background-color: #2a2a2a;
    border: 1px solid #383838;
    border-radius: 24px;
    display: flex;
    align-items: center;
    justify-content: flex-end;
}

.sticker {
    width: 33px;
    height: 32px;
}

.camera {
    width: 41px;
    height: 33px;
    margin-left: 34px;
}

.mic {
    width: 28px;
    height: 40px;
    margin-left: 35px;
}

.home-bar {
    width: 263px;
    height: 9px;
    margin: 50px auto 0;
    background-color: #f5f5f5;
    border-radius: 5px;
}
```
